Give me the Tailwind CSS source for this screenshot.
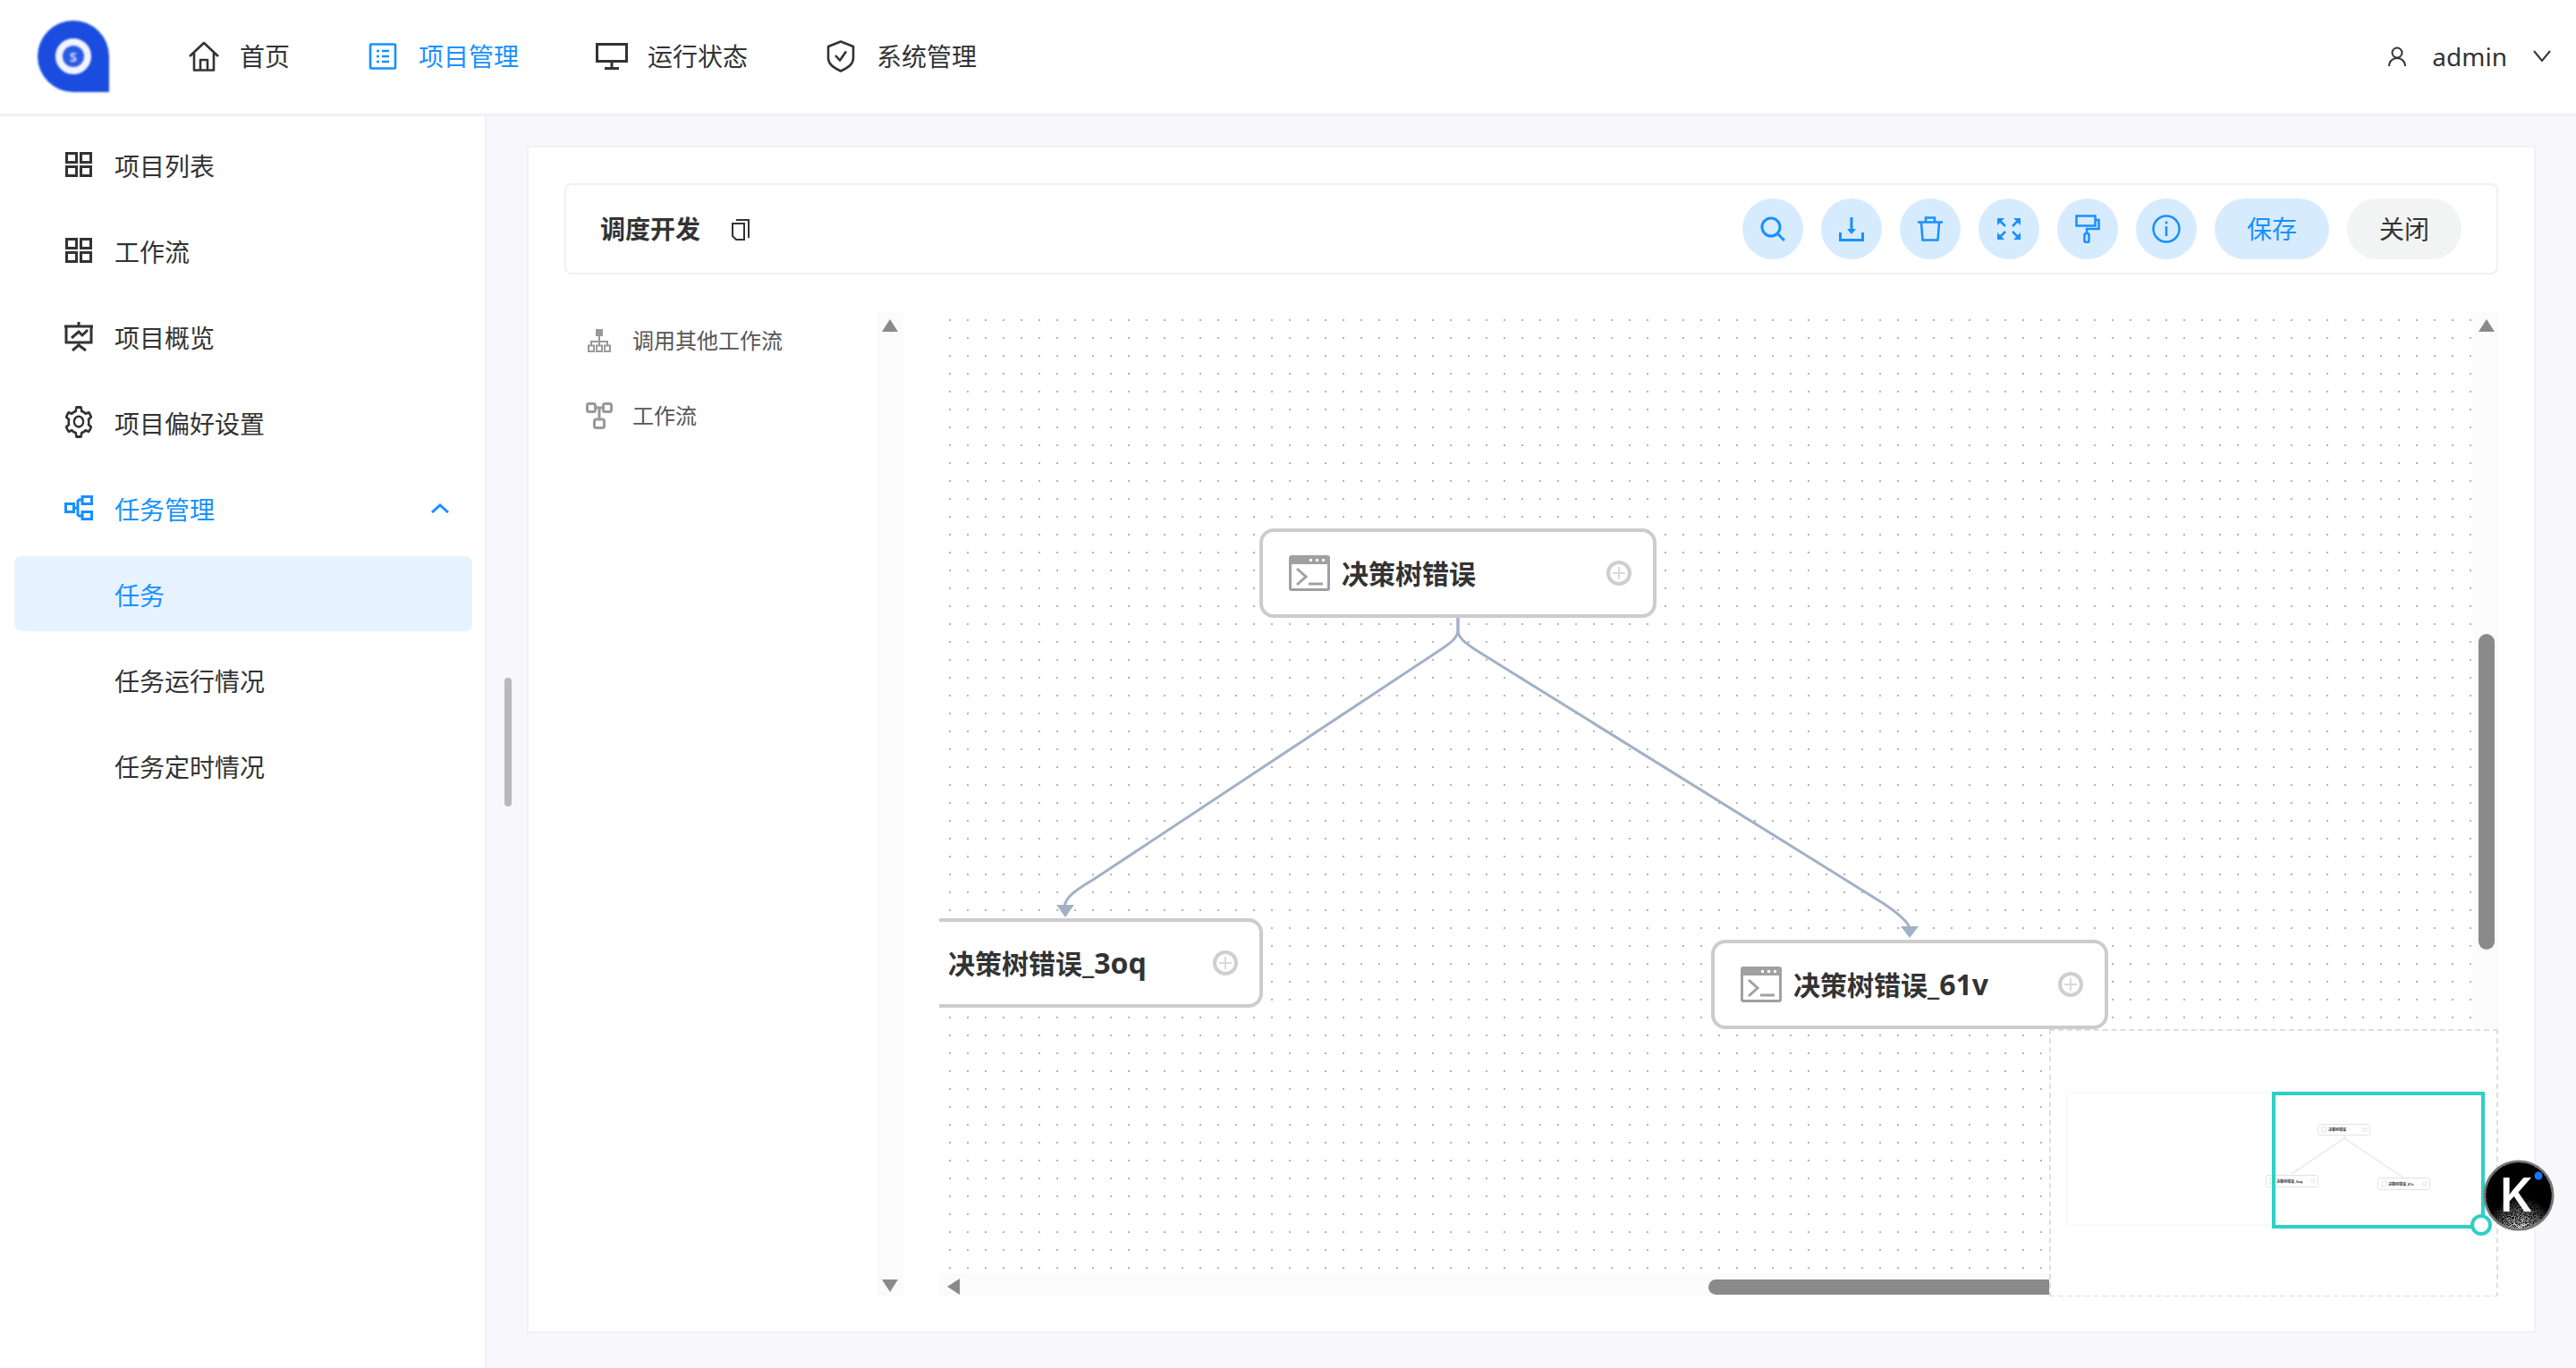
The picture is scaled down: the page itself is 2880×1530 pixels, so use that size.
<!DOCTYPE html>
<html lang="zh-CN">
<head>
  <meta charset="UTF-8">
  <title>调度开发</title>
  <script src="https://cdn.jsdelivr.net/npm/@tailwindcss/browser@4"></script>
</head>
<body class="relative w-[2880px] h-[1530px] overflow-hidden bg-[#f7f7fc] text-[#333] text-[28px] font-['Noto_Sans','Noto_Sans_CJK_SC',sans-serif]">
  <!-- shared icons -->
  <svg class="hidden">
    <symbol id="terminal" viewBox="0 0 46 40">
      <rect width="46" height="40" rx="3" fill="#a0a0a0"/>
      <rect x="3" y="10" width="40" height="27" fill="#fff"/>
      <rect x="23" y="4" width="3" height="3" fill="#fff"/><rect x="30" y="4" width="3" height="3" fill="#fff"/><rect x="37" y="4" width="3" height="3" fill="#fff"/>
      <path d="M9 15l10 9-10 9" fill="none" stroke="#a0a0a0" stroke-width="3"/>
      <path d="M22 32h16" stroke="#a0a0a0" stroke-width="3"/>
    </symbol>
    <symbol id="plus" viewBox="0 0 28 28">
      <circle cx="14" cy="14" r="12" fill="none" stroke="#cfcfcf" stroke-width="4"/>
      <path d="M14 7v14M7 14h14" stroke="#dadada" stroke-width="2"/>
    </symbol>
    <symbol id="grid" viewBox="0 0 30 28">
      <g fill="none" stroke="#333" stroke-width="3">
        <rect x="1.5" y="1.5" width="11" height="10"/><rect x="17.5" y="1.5" width="11" height="10"/>
        <rect x="1.5" y="16.5" width="11" height="10"/><rect x="17.5" y="16.5" width="11" height="10"/>
      </g>
    </symbol>
  </svg>

  <!-- top bar -->
  <header class="flex items-center h-[130px] bg-white border-b-[3px] border-[#f0f0f6] pb-[1px]">
    <div class="ml-[42px] w-[80px] h-[80px] flex items-center justify-center rounded-full rounded-br-none bg-[#1a4ce0] blur-[1px]">
      <div class="w-[40px] h-[40px] flex items-center justify-center rounded-full border-[8px] border-[#f2f5ff] bg-[#2a5be4] text-[#d5e0ff] text-[15px] font-bold">S</div>
    </div>
    <nav class="flex items-center gap-[86px] ml-[88px]">
      <a class="flex items-center gap-[22px]">
        <svg class="w-[36px] h-[34px]" viewBox="0 0 36 34" fill="none" stroke="#333" stroke-width="2.6" stroke-linejoin="round"><path d="M2 17L18 2l16 15M7 13v19.500h22V13M14 32.500V21h8v11.500"/></svg>
        <span>首页</span>
      </a>
      <a class="flex items-center gap-[22px] text-[#1890ff]">
        <svg class="w-[36px] h-[30px]" viewBox="0 0 36 30" fill="none" stroke="#1890ff" stroke-width="2.6"><rect x="4" y="1.500" width="28" height="27" rx="1"/><path d="M11 9h3M17 9h8M11 15h3M17 15h8M11 21h3M17 21h8"/></svg>
        <span>项目管理</span>
      </a>
      <a class="flex items-center gap-[22px]">
        <svg class="w-[36px] h-[30px]" viewBox="0 0 36 30" fill="none" stroke="#333" stroke-width="3"><rect x="1.500" y="1.500" width="33" height="19" /><path d="M18 21v7M10 28.500h16"/></svg>
        <span>运行状态</span>
      </a>
      <a class="flex items-center gap-[22px]">
        <svg class="w-[36px] h-[36px]" viewBox="0 0 36 36" fill="none" stroke="#333" stroke-width="2.600" stroke-linejoin="round"><path d="M18 1.500l14 5.500v13c0 7-7 11.500-14 14.500-7-3-14-7.500-14-14.500V7z"/><path d="M12 17l5 5.500 7-10"/></svg>
        <span>系统管理</span>
      </a>
    </nav>
    <div class="ml-auto mr-[28px] flex items-center">
      <svg class="w-[20px] h-[22px]" viewBox="0 0 20 22" fill="none" stroke="#333" stroke-width="2"><circle cx="10" cy="7" r="5.500"/><path d="M1 22c0-5.500 4-9 9-9s9 3.500 9 9"/></svg>
      <span class="ml-[29px]">admin</span>
      <svg class="ml-[29px] w-[20px] h-[14px]" viewBox="0 0 20 14" fill="none" stroke="#333" stroke-width="2"><path d="M1 1l9 11 9-11"/></svg>
    </div>
  </header>

  <div class="flex h-[1400px]">
    <!-- side menu -->
    <aside class="w-[544px] shrink-0 bg-white border-r-2 border-[#f0f0f6] pt-3">
      <a class="flex items-center h-[84px] mb-3 ml-4 mr-[14px] pl-14 gap-6"><svg class="w-[32px] h-[28px]"><use href="#grid"/></svg><span class="pt-[3px]">项目列表</span></a>
      <a class="flex items-center h-[84px] mb-3 ml-4 mr-[14px] pl-14 gap-6"><svg class="w-[32px] h-[28px]"><use href="#grid"/></svg><span class="pt-[3px]">工作流</span></a>
      <a class="flex items-center h-[84px] mb-3 ml-4 mr-[14px] pl-14 gap-6">
        <svg class="w-[32px] h-[34px]" viewBox="0 0 32 34" fill="none" stroke="#333" stroke-width="3"><path d="M0 6h32M2 6v18h28V6M16 1v5M8 19l8-7 4 4 6-6M9 33l7-6 8 6"/></svg>
        <span class="pt-[3px]">项目概览</span>
      </a>
      <a class="flex items-center h-[84px] mb-3 ml-4 mr-[14px] pl-14 gap-6">
        <svg class="w-[32px] h-[36px]" viewBox="64 64 896 896" preserveAspectRatio="none" fill="#333"><path d="M924.8 625.7l-65.5-56c3.1-19 4.7-38.4 4.7-57.8s-1.6-38.8-4.7-57.8l65.5-56a32.03 32.03 0 0 0 9.3-35.2l-.9-2.6a443.74 443.74 0 0 0-79.7-137.9l-1.8-2.1a32.12 32.12 0 0 0-35.1-9.5l-81.3 28.9c-30-24.6-63.5-44-99.7-57.6l-15.7-85a32.05 32.05 0 0 0-25.8-25.7l-2.7-.5c-52.1-9.4-106.9-9.4-159 0l-2.7.5a32.05 32.05 0 0 0-25.8 25.7l-15.8 85.4a351.86 351.86 0 0 0-99 57.4l-81.9-29.1a32 32 0 0 0-35.1 9.5l-1.8 2.1a446.02 446.02 0 0 0-79.7 137.9l-.9 2.6c-4.5 12.5-.8 26.5 9.3 35.2l66.3 56.6c-3.1 18.8-4.6 38-4.6 57.1 0 19.2 1.5 38.4 4.6 57.1L99 625.5a32.03 32.03 0 0 0-9.3 35.2l.9 2.6c18.1 50.4 44.9 96.9 79.7 137.9l1.8 2.1a32.12 32.12 0 0 0 35.1 9.5l81.9-29.1c29.8 24.5 63.1 43.9 99 57.4l15.8 85.4a32.05 32.05 0 0 0 25.8 25.7l2.7.5a449.4 449.4 0 0 0 159 0l2.7-.5a32.05 32.05 0 0 0 25.8-25.7l15.7-85a350 350 0 0 0 99.7-57.6l81.3 28.9a32 32 0 0 0 35.1-9.5l1.8-2.1c34.8-41.1 61.6-87.5 79.7-137.9l.9-2.6c4.5-12.3.8-26.3-9.3-35zM788.3 465.9c2.5 15.1 3.8 30.6 3.8 46.1s-1.3 31-3.8 46.1l-6.6 40.1 74.7 63.9a370.03 370.03 0 0 1-42.6 73.6L721 702.8l-31.4 25.8c-23.9 19.6-50.5 35-79.3 45.8l-38.1 14.3-17.9 97a377.5 377.5 0 0 1-85 0l-17.9-97.2-37.8-14.5c-28.5-10.8-55-26.2-78.7-45.7l-31.4-25.9-93.4 33.2c-17-22.9-31.2-47.6-42.6-73.6l75.5-64.5-6.5-40c-2.4-14.9-3.7-30.3-3.7-45.5 0-15.3 1.2-30.6 3.7-45.5l6.5-40-75.5-64.5c11.3-26.1 25.6-50.7 42.6-73.6l93.4 33.2 31.4-25.9c23.7-19.5 50.2-34.9 78.7-45.7l37.9-14.3 17.9-97.2c28.1-3.2 56.8-3.2 85 0l17.9 97 38.1 14.3c28.7 10.8 55.4 26.2 79.3 45.8l31.4 25.8 92.8-32.9c17 22.9 31.2 47.6 42.6 73.6L781.8 426l6.5 39.9zM512 326c-97.2 0-176 78.8-176 176s78.8 176 176 176 176-78.8 176-176-78.8-176-176-176zm79.2 255.2A111.6 111.6 0 0 1 512 614c-29.9 0-58-11.7-79.2-32.8A111.6 111.6 0 0 1 400 502c0-29.9 11.7-58 32.8-79.2C454 401.6 482.1 390 512 390c29.9 0 58 11.6 79.2 32.8A111.6 111.6 0 0 1 624 502c0 29.9-11.7 58-32.8 79.2z"/></svg>
        <span class="pt-[3px]">项目偏好设置</span>
      </a>
      <a class="flex items-center h-[84px] mb-3 ml-4 mr-[14px] pl-14 gap-6 text-[#1890ff]">
        <svg class="w-[32px] h-[28px]" viewBox="0 0 32 28" fill="none" stroke="#1890ff" stroke-width="3"><rect x="1.500" y="9.500" width="9" height="9"/><rect x="20" y="1.500" width="10.500" height="8"/><rect x="20" y="18.500" width="10.500" height="8"/><path d="M10 14h5M15 5v18M15 5h5M15 23h5"/></svg>
        <span class="pt-[3px]">任务管理</span>
        <svg class="ml-auto mr-[26px] w-[20px] h-[12px]" viewBox="0 0 20 12" fill="none" stroke="#1890ff" stroke-width="3"><path d="M1 11l9-8 9 8"/></svg>
      </a>
      <a class="flex items-center h-[84px] mb-3 ml-4 mr-[14px] pl-[112px] rounded-lg bg-[#e6f3ff] text-[#1890ff]"><span class="pt-[3px]">任务</span></a>
      <a class="flex items-center h-[84px] mb-3 ml-4 mr-[14px] pl-[112px]"><span class="pt-[3px]">任务运行情况</span></a>
      <a class="flex items-center h-[84px] mb-3 ml-4 mr-[14px] pl-[112px]"><span class="pt-[3px]">任务定时情况</span></a>
    </aside>

    <main class="flex-1 pl-[45px] pr-[45px] pt-[33px] pb-[39px]">
      <div class="h-[1328px] bg-white border-2 border-[#f0f0f6] pl-10 pr-10 pt-10">
        <!-- toolbar -->
        <div class="flex items-center h-[102px] pl-[38px] pr-[39px] border-2 border-[#f0f0f6] rounded-lg">
          <span class="font-bold">调度开发</span>
          <svg class="ml-[35px] w-[20px] h-[25px]" viewBox="0 0 20 25" fill="none" stroke="#333" stroke-width="2"><path d="M5 2h14v20M1 6h13v18H5l-4-4z"/></svg>
          <div class="ml-auto flex items-center gap-5">
            <button class="w-[68px] h-[68px] flex items-center justify-center rounded-full bg-[#d7ebff]">
              <svg class="w-[28px] h-[28px]" viewBox="0 0 28 28" fill="none" stroke="#1890ff" stroke-width="3"><circle cx="12" cy="12" r="10"/><path d="M19 19l8 8"/></svg>
            </button>
            <button class="w-[68px] h-[68px] flex items-center justify-center rounded-full bg-[#d7ebff]">
              <svg class="w-[28px] h-[27px]" viewBox="0 0 28 27" fill="none" stroke="#1890ff" stroke-width="3"><path d="M14 0v15M1.500 17v8.500h25V17"/><path d="M9 13h10l-5 6z" fill="#1890ff" stroke="none"/></svg>
            </button>
            <button class="w-[68px] h-[68px] flex items-center justify-center rounded-full bg-[#d7ebff]">
              <svg class="w-[28px] h-[28px]" viewBox="0 0 28 28" fill="none" stroke="#1890ff" stroke-width="2.500"><path d="M0 6.500h28M9 6V1.500h10V6M4 7l1.500 19.500h17L24 7"/></svg>
            </button>
            <button class="w-[68px] h-[68px] flex items-center justify-center rounded-full bg-[#d7ebff]">
              <svg class="w-[26px] h-[24px]" viewBox="0 0 26 24" fill="none" stroke="#1890ff" stroke-width="2.500"><path d="M3 3l6 6M23 3l-6 6M3 21l6-6M23 21l-6-6"/><path d="M0 0h8L0 8zM26 0h-8l8 8zM0 24h8l-8-8zM26 24h-8l8-8z" fill="#1890ff" stroke="none"/></svg>
            </button>
            <button class="w-[68px] h-[68px] flex items-center justify-center rounded-full bg-[#d7ebff]">
              <svg class="w-[28px] h-[32px]" viewBox="0 0 28 32" fill="none" stroke="#1890ff" stroke-width="2.500"><rect x="1.500" y="1.500" width="21" height="11"/><path d="M23 6h3.500v10H13v5"/><rect x="10.500" y="21" width="5" height="10" rx="2"/></svg>
            </button>
            <button class="w-[68px] h-[68px] flex items-center justify-center rounded-full bg-[#d7ebff]">
              <svg class="w-[32px] h-[32px]" viewBox="0 0 32 32" fill="none" stroke="#1890ff" stroke-width="2.500"><circle cx="16" cy="16" r="14.500"/><path d="M16 13v11M16 7.500v3"/></svg>
            </button>
            <button class="w-[128px] h-[68px] rounded-full bg-[#d7ebff] text-[#1890ff]">保存</button>
            <button class="w-[128px] h-[68px] rounded-full bg-[#f2f4f4]">关闭</button>
          </div>
        </div>

        <div class="flex gap-10 mt-[41px] h-[1102px]">
          <!-- node palette -->
          <div class="flex w-[379px] shrink-0">
            <div class="flex-1 pl-[24px] text-[24px] text-[#555]">
              <div class="flex items-center h-[66px] gap-[22px] mb-[18px]">
                <svg class="w-[30px] h-[28px]" viewBox="0 0 30 28" fill="none" stroke="#999" stroke-width="2"><rect x="11" y="1" width="8" height="8" fill="#999" stroke="none"/><path d="M15 9v5M6 19v-4h18v4M15 14v5"/><rect x="3" y="19.500" width="6" height="6.500"/><rect x="12" y="19.500" width="6" height="6.500"/><rect x="21" y="19.500" width="6" height="6.500"/></svg>
                <span>调用其他工作流</span>
              </div>
              <div class="flex items-center h-[66px] gap-[22px]">
                <svg class="w-[30px] h-[30px]" viewBox="0 0 30 30" fill="none" stroke="#999" stroke-width="3"><rect x="1.500" y="1.500" width="9" height="9" rx="2"/><rect x="19.500" y="1.500" width="9" height="9" rx="2"/><rect x="9.500" y="19" width="11" height="9.500" rx="2"/><path d="M10 6h10M15 6v13"/></svg>
                <span>工作流</span>
              </div>
            </div>
            <div class="relative w-[30px] bg-[#fbfbfb]">
              <svg class="absolute left-[6px] top-[9px] w-[18px] h-[14px]" viewBox="0 0 18 14" fill="#8a8a8a"><path d="M9 0l9 14H0z"/></svg>
              <svg class="absolute left-[6px] bottom-[5px] w-[18px] h-[14px]" viewBox="0 0 18 14" fill="#8a8a8a"><path d="M9 14L18 0H0z"/></svg>
            </div>
          </div>

          <!-- graph canvas -->
          <div class="relative flex-1 overflow-hidden">
            <svg class="absolute left-0 top-0 w-[1714px] h-[1076px]" viewBox="1050 348 1714 1076">
              <defs><pattern id="dots" x="1061" y="357" width="20" height="20" patternUnits="userSpaceOnUse"><rect width="2" height="2" fill="#b4b4b4"/></pattern></defs>
              <rect x="1050" y="348" width="1714" height="1076" fill="url(#dots)"/>
              <g fill="none" stroke="#a2b1c6" stroke-width="3">
                <path d="M1630 691V705C1630 713 1622 719 1610 727L1228 980C1210 992 1192 1000 1190 1014"/>
                <path d="M1630 691V705C1630 713 1638 719 1650 727L2105 1010C2120 1020 2133 1030 2135 1038"/>
              </g>
              <path d="M1181 1012h20l-10 14zM2125 1036h20l-10 13z" fill="#a2b1c6"/>
            </svg>

            <div class="absolute left-[358px] top-[243px] w-[444px] h-[100px] flex items-center pl-[29px] pr-[24px] bg-white border-4 border-[#ccc] rounded-[16px]">
              <svg class="w-[46px] h-[40px] shrink-0"><use href="#terminal"/></svg>
              <span class="ml-[13px] text-[30px] font-bold">决策树错误</span>
              <svg class="ml-auto w-[28px] h-[28px]"><use href="#plus"/></svg>
            </div>
            <div class="absolute left-[-82px] top-[679px] w-[444px] h-[100px] flex items-center pl-[29px] pr-[24px] bg-white border-4 border-[#ccc] rounded-[16px]">
              <svg class="w-[46px] h-[40px] shrink-0"><use href="#terminal"/></svg>
              <span class="ml-[13px] text-[30px] font-bold">决策树错误<span class="text-[32px]">_3oq</span></span>
              <svg class="ml-auto w-[28px] h-[28px]"><use href="#plus"/></svg>
            </div>
            <div class="absolute left-[863px] top-[703px] w-[444px] h-[100px] flex items-center pl-[29px] pr-[24px] bg-white border-4 border-[#ccc] rounded-[16px]">
              <svg class="w-[46px] h-[40px] shrink-0"><use href="#terminal"/></svg>
              <span class="ml-[13px] text-[30px] font-bold">决策树错误<span class="text-[32px]">_61v</span></span>
              <svg class="ml-auto w-[28px] h-[28px]"><use href="#plus"/></svg>
            </div>

            <!-- scrollbars -->
            <div class="absolute right-0 top-0 w-[28px] h-full bg-[#fbfbfb]">
              <svg class="absolute left-[6px] top-[9px] w-[18px] h-[14px]" viewBox="0 0 18 14" fill="#8a8a8a"><path d="M9 0l9 14H0z"/></svg>
              <div class="absolute left-[6px] top-[361px] w-[18px] h-[353px] rounded-full bg-[#8a8a8a]"></div>
            </div>
            <div class="absolute left-0 bottom-0 right-[28px] h-[26px] bg-[#fbfbfb]">
              <svg class="absolute left-[9px] top-[6px] w-[14px] h-[18px]" viewBox="0 0 14 18" fill="#8a8a8a"><path d="M0 9l14-9v18z"/></svg>
              <div class="absolute left-[860px] top-[7px] w-[390px] h-[17px] rounded-full bg-[#8a8a8a]"></div>
            </div>

            <!-- minimap -->
            <div class="absolute left-[1241px] top-[803px] w-[502px] h-[300px] bg-white border-2 border-dashed border-[#dedede]">
              <div class="absolute left-[19px] top-[70px] w-[466px] h-[146px] bg-white shadow-[0_0_6px_rgba(0,0,0,0.06)]"></div>
              <svg class="absolute left-0 top-0 w-[498px] h-[296px]" viewBox="2293 1153 498 296">
                <g fill="#fff" stroke="#e2e2e2" stroke-width="1">
                  <rect x="2591.500" y="1257.500" width="58" height="12" rx="2"/>
                  <rect x="2533.500" y="1314.500" width="58" height="13" rx="2"/>
                  <rect x="2658.500" y="1317.500" width="58" height="13" rx="2"/>
                  <path d="M2621 1270v3L2562 1313M2621 1273L2687 1317" fill="none" stroke="#d6dde6"/>
                  <rect x="2596" y="1260" width="5" height="6"/><rect x="2538" y="1318" width="5" height="6"/><rect x="2663" y="1321" width="5" height="6"/>
                  <circle cx="2644" cy="1263.500" r="2"/><circle cx="2586" cy="1321" r="2"/><circle cx="2711" cy="1324" r="2"/>
                </g>
                <g font-size="4" font-weight="700" fill="#333">
                  <text x="2603" y="1265">决策树错误</text>
                  <text x="2545" y="1322.500">决策树错误_3oq</text>
                  <text x="2670" y="1325.500">决策树错误_61v</text>
                </g>
              </svg>
              <div class="absolute left-[247px] top-[68px] w-[238px] h-[153px] border-4 border-[#2dd0c4]"></div>
              <div class="absolute left-[469px] top-[205px] w-[24px] h-[24px] rounded-full bg-white border-4 border-[#2dd0c4]"></div>
            </div>
          </div>
        </div>
      </div>
    </main>
  </div>

  <!-- sidebar scrollbar -->
  <div class="absolute left-[564px] top-[758px] w-[8px] h-[144px] rounded-full bg-[#b9b9b9]"></div>

  <!-- floating assistant badge -->
  <svg class="absolute left-[2776px] top-[1297px] w-[80px] h-[80px]" viewBox="0 0 80 80">
    <defs>
      <radialGradient id="glow" cx="52%" cy="100%" r="48%"><stop offset="0" stop-color="#fff"/><stop offset="0.5" stop-color="#888"/><stop offset="1" stop-color="#000"/></radialGradient>
      <filter id="grain" x="0" y="0" width="100%" height="100%"><feTurbulence type="fractalNoise" baseFrequency="1.1" numOctaves="2" seed="4" result="n"/><feColorMatrix in="n" type="matrix" values="0 0 0 0 0 0 0 0 0 0 0 0 0 0 0 3 3 0 0 -2.400" result="m"/><feComposite in="SourceGraphic" in2="m" operator="in"/></filter>
      <clipPath id="disc"><circle cx="40" cy="40" r="37"/></clipPath>
    </defs>
    <circle cx="40" cy="40" r="38" fill="#000" stroke="#777" stroke-width="3"/>
    <g clip-path="url(#disc)"><rect width="80" height="80" fill="url(#glow)" filter="url(#grain)"/></g>
    <text x="19" y="58" font-family="Inter" font-size="52" font-weight="600" fill="#fff">K</text>
    <circle cx="62" cy="18" r="4.500" fill="#1677ff"/>
  </svg>
</body>
</html>
